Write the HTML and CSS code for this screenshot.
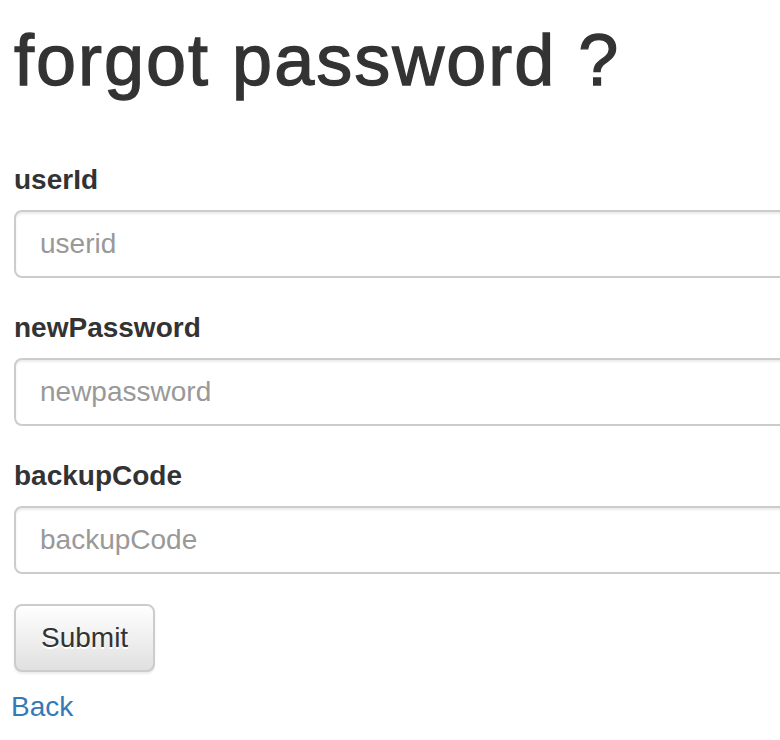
FILE: index.html
```html
<!DOCTYPE html>
<html>
<head>
<meta charset="utf-8">
<title>forgot password</title>
<link rel="stylesheet" href="styles.css">
</head>
<body>
<div class="page">
  <h1 class="title">forgot password ?</h1>
  <form class="form">
    <div class="group">
      <label class="label" for="userid">userId</label>
      <input class="input" id="userid" type="text" placeholder="userid">
    </div>
    <div class="group">
      <label class="label" for="newpassword">newPassword</label>
      <input class="input" id="newpassword" type="text" placeholder="newpassword">
    </div>
    <div class="group">
      <label class="label" for="backupcode">backupCode</label>
      <input class="input" id="backupcode" type="text" placeholder="backupCode">
    </div>
    <button class="btn" type="button">Submit</button>
  </form>
  <a class="back" href="#">Back</a>
</div>
</body>
</html>
```
FILE: styles.css
```css
html, body {
  margin: 0;
  padding: 0;
  overflow: hidden;
  background: #fff;
}
body {
  font-family: "Liberation Sans", Arial, Helvetica, sans-serif;
  color: #333;
  font-size: 28px;
  line-height: 40px;
}
.page {
  padding: 0 0 0 14px;
  width: 820px;
}
.title {
  margin: 21px 0 60px 0;
  font-size: 72px;
  line-height: 79px;
  font-weight: 500;
  letter-spacing: 2px;
  -webkit-text-stroke: 1.3px #333;
  color: #333;
}
.form {
  display: flex;
  flex-direction: column;
  align-items: flex-start;
}
.group {
  display: flex;
  flex-direction: column;
  margin-bottom: 30px;
  width: 100%;
}
.label {
  font-weight: bold;
  font-size: 28px;
  line-height: 40px;
  margin-bottom: 10px;
}
.input {
  box-sizing: border-box;
  width: 100%;
  height: 68px;
  padding: 12px 24px;
  font-family: "Liberation Sans", Arial, Helvetica, sans-serif;
  font-size: 28px;
  line-height: 40px;
  color: #555;
  background: #fff;
  border: 2px solid #ccc;
  border-radius: 8px;
  box-shadow: inset 0 2px 2px rgba(0, 0, 0, 0.075);
  outline: none;
}
.input::placeholder {
  color: #999;
}
.btn {
  box-sizing: border-box;
  height: 68px;
  padding: 12px 25px;
  font-family: "Liberation Sans", Arial, Helvetica, sans-serif;
  font-size: 28px;
  line-height: 40px;
  color: #333;
  background-image: linear-gradient(to bottom, #fff 0, #e0e0e0 100%);
  border: 2px solid #ccc;
  border-radius: 8px;
  box-shadow: inset 0 2px 0 rgba(255, 255, 255, 0.15), 0 2px 2px rgba(0, 0, 0, 0.075);
  text-shadow: 0 2px 0 #fff;
  cursor: pointer;
}
.back {
  display: inline-block;
  margin: 15px 0 0 -3px;
  color: #337ab7;
  text-decoration: none;
  font-size: 28px;
  line-height: 40px;
}
```
